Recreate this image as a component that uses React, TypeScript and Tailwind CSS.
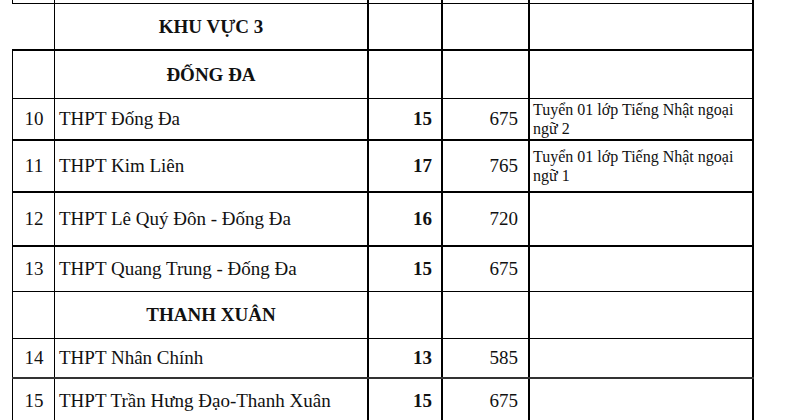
import React from "react";

type RowProps = {
  h: string;
  bb: string;
  noLeft?: boolean;
  no?: string;
  name?: string;
  section?: string;
  a?: string;
  b?: string;
  note?: string[];
};

function Row({ h, bb, noLeft, no, name, section, a, b, note }: RowProps) {
  return (
    <div className={`flex w-full border-black ${h} ${bb}`}>
      <div
        className={
          noLeft
            ? "flex w-[43px] shrink-0 items-center justify-center border-r border-black pl-[1px]"
            : "flex w-[43px] shrink-0 items-center justify-center border-l border-r border-black pl-[1px]"
        }
      >
        {no}
      </div>
      <div
        className={
          section
            ? "flex w-[314px] shrink-0 items-center justify-center border-r-2 border-black font-bold"
            : "flex w-[314px] shrink-0 items-center border-r-2 border-black pl-[4px]"
        }
      >
        {section ?? name}
      </div>
      <div className="flex w-[74px] shrink-0 items-center justify-end border-r-2 border-black pr-[9px] font-bold">
        {a}
      </div>
      <div className="flex w-[87px] shrink-0 items-center justify-end border-r-2 border-black pr-[10px]">
        {b}
      </div>
      <div className="flex w-[224px] shrink-0 items-center border-r-2 border-black pl-[3px] text-[16px] leading-[19px]">
        {note ? (
          <div>
            {note.map((l, i) => (
              <div key={i}>{l}</div>
            ))}
          </div>
        ) : null}
      </div>
    </div>
  );
}

export default function App() {
  return (
    <div className="h-[420px] w-[792px] overflow-hidden bg-white font-['Liberation_Serif','Times_New_Roman',serif] text-[19px] leading-[22px] text-[#111]">
      <div className="ml-[12px] w-[742px]">
        <Row h="h-[4px]" bb="border-b" />
        <Row h="h-[47px]" bb="border-b-2" noLeft section="KHU VỰC 3" />
        <Row h="h-[48px]" bb="border-b" section="ĐỐNG ĐA" />
        <Row
          h="h-[42px]"
          bb="border-b-2"
          no="10"
          name="THPT Đống Đa"
          a="15"
          b="675"
          note={["Tuyển 01 lớp Tiếng Nhật ngoại", "ngữ 2"]}
        />
        <Row
          h="h-[52px]"
          bb="border-b-2"
          no="11"
          name="THPT Kim Liên"
          a="17"
          b="765"
          note={["Tuyển 01 lớp Tiếng Nhật ngoại", "ngữ 1"]}
        />
        <Row h="h-[54px]" bb="border-b-2" no="12" name="THPT Lê Quý Đôn - Đống Đa" a="16" b="720" />
        <Row h="h-[45px]" bb="border-b" no="13" name="THPT Quang Trung - Đống Đa" a="15" b="675" />
        <Row h="h-[47px]" bb="border-b" section="THANH XUÂN" />
        <Row h="h-[40px]" bb="border-b-2 border-b-[#333]" no="14" name="THPT Nhân Chính" a="13" b="585" />
        <Row h="h-[45px]" bb="border-b" no="15" name="THPT Trần Hưng Đạo-Thanh Xuân" a="15" b="675" />
      </div>
    </div>
  );
}
